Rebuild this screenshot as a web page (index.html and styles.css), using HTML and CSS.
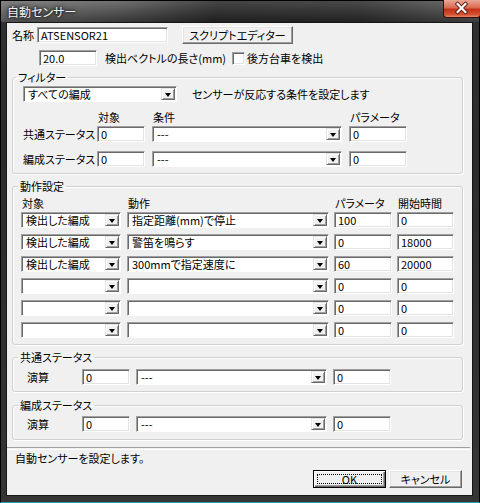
FILE: index.html
```html
<!DOCTYPE html>
<html lang="ja">
<head>
  <meta charset="UTF-8">
  <title>自動センサー</title>
  <link rel="stylesheet" href="styles.css">
</head>
<body>
<div class="window">
  <div class="titlebar">
    <span class="title">自動センサー</span>
    <span class="close">
      <svg width="38" height="18" viewBox="0 0 38 18">
        <path d="M15 5 L23 13 M23 5 L15 13" stroke="#5a1a10" stroke-width="4" stroke-linecap="square"/>
        <path d="M15 5 L23 13 M23 5 L15 13" stroke="#fff" stroke-width="2.2" stroke-linecap="square"/>
      </svg>
    </span>
  </div>

  <div class="client">
    <div class="row row-name">
      <span class="lbl name-lbl">名称</span>
      <div class="edit name-edit">ATSENSOR21</div>
      <div class="btn script-btn">スクリプトエディター</div>
    </div>

    <div class="row row-len">
      <div class="edit len-edit">20.0</div>
      <span class="lbl len-lbl">検出ベクトルの長さ(mm)</span>
      <span class="check"></span>
      <span class="lbl check-lbl">後方台車を検出</span>
    </div>

    <fieldset class="group filter">
      <legend>フィルター</legend>
      <div class="row">
        <div class="combo target-combo"><span class="txt">すべての編成</span><i class="drop"></i></div>
        <span class="lbl hint">センサーが反応する条件を設定します</span>
      </div>
      <div class="row head">
        <span class="c0"></span>
        <span class="c1">対象</span>
        <span class="c2">条件</span>
        <span class="c3">パラメータ</span>
      </div>
      <div class="row line">
        <span class="c0">共通ステータス</span>
        <div class="edit c1">0</div>
        <div class="combo c2"><span class="txt">---</span><i class="drop"></i></div>
        <div class="edit c3">0</div>
      </div>
      <div class="row line">
        <span class="c0">編成ステータス</span>
        <div class="edit c1">0</div>
        <div class="combo c2"><span class="txt">---</span><i class="drop"></i></div>
        <div class="edit c3">0</div>
      </div>
    </fieldset>

    <fieldset class="group action">
      <legend>動作設定</legend>
      <div class="row head">
        <span class="c1">対象</span>
        <span class="c2">動作</span>
        <span class="c3">パラメータ</span>
        <span class="c4">開始時間</span>
      </div>
      <div class="row line">
        <div class="combo c1"><span class="txt">検出した編成</span><i class="drop"></i></div>
        <div class="combo c2"><span class="txt">指定距離(mm)で停止</span><i class="drop"></i></div>
        <div class="edit c3">100</div>
        <div class="edit c4">0</div>
      </div>
      <div class="row line">
        <div class="combo c1"><span class="txt">検出した編成</span><i class="drop"></i></div>
        <div class="combo c2"><span class="txt">警笛を鳴らす</span><i class="drop"></i></div>
        <div class="edit c3">0</div>
        <div class="edit c4">18000</div>
      </div>
      <div class="row line">
        <div class="combo c1"><span class="txt">検出した編成</span><i class="drop"></i></div>
        <div class="combo c2"><span class="txt">300mmで指定速度に</span><i class="drop"></i></div>
        <div class="edit c3">60</div>
        <div class="edit c4">20000</div>
      </div>
      <div class="row line">
        <div class="combo c1"><span class="txt"></span><i class="drop"></i></div>
        <div class="combo c2"><span class="txt"></span><i class="drop"></i></div>
        <div class="edit c3">0</div>
        <div class="edit c4">0</div>
      </div>
      <div class="row line">
        <div class="combo c1"><span class="txt"></span><i class="drop"></i></div>
        <div class="combo c2"><span class="txt"></span><i class="drop"></i></div>
        <div class="edit c3">0</div>
        <div class="edit c4">0</div>
      </div>
      <div class="row line">
        <div class="combo c1"><span class="txt"></span><i class="drop"></i></div>
        <div class="combo c2"><span class="txt"></span><i class="drop"></i></div>
        <div class="edit c3">0</div>
        <div class="edit c4">0</div>
      </div>
    </fieldset>

    <fieldset class="group status common">
      <legend>共通ステータス</legend>
      <div class="row line">
        <span class="c0">演算</span>
        <div class="edit c1">0</div>
        <div class="combo c2"><span class="txt">---</span><i class="drop"></i></div>
        <div class="edit c3">0</div>
      </div>
    </fieldset>

    <fieldset class="group status formation">
      <legend>編成ステータス</legend>
      <div class="row line">
        <span class="c0">演算</span>
        <div class="edit c1">0</div>
        <div class="combo c2"><span class="txt">---</span><i class="drop"></i></div>
        <div class="edit c3">0</div>
      </div>
    </fieldset>

    <div class="separator"></div>
    <div class="status-text">自動センサーを設定します。</div>

    <div class="row buttons">
      <div class="btn default"><span class="focus">OK</span></div>
      <div class="btn cancel">キャンセル</div>
    </div>
  </div>
</div>
</body>
</html>
```

FILE: styles.css
```css
body {
  margin: 0;
  background: #1c1c1c;
  font-family: "Noto Sans CJK JP", "Noto Sans", sans-serif;
  font-size: 11px;
  line-height: 14px;
  color: #000;
  font-feature-settings: "palt";
}

.window {
  box-sizing: border-box;
  width: 480px;
  height: 503px;
  display: flex;
  flex-direction: column;
  border: 1px solid #000;
  border-bottom-color: #2a9bb0;
  padding: 0 6px 6px 5px;
  background: linear-gradient(to bottom, #6a6a6a 0, #303030 21px, #2b2b2b 140px, #353535 100%);
}

.titlebar {
  height: 21px;
  display: flex;
  align-items: flex-start;
  background: linear-gradient(100deg, rgba(255,255,255,0.18) 0, rgba(255,255,255,0.04) 25%, rgba(0,0,0,0.35) 45%, rgba(0,0,0,0.3) 75%, rgba(255,255,255,0.06) 100%);
  margin: 0 -6px 0 -5px;
  padding: 0 6px 0 5px;
}

.title {
  padding: 4px 0 0 1px;
  font-size: 12px;
  color: #f2f2f2;
  text-shadow: 0 0 3px #000, 0 0 6px rgba(0,0,0,0.8);
}

.close {
  margin: -1px -8px 0 auto;
  width: 38px;
  height: 18px;
  box-sizing: border-box;
  border: 1px solid #3a0d06;
  border-top: none;
  border-radius: 0 0 4px 4px;
  background: linear-gradient(to bottom, #e9a796 0, #d96a50 45%, #c3301a 55%, #d4502f 85%, #e48a6a 100%);
  display: flex;
}

.close svg {
  margin: -1px 0 0 -1px;
}

.client {
  flex: 1;
  display: flex;
  flex-direction: column;
  background: #f0f0f0;
  border: 1px solid #161616;
}

.row {
  display: flex;
  align-items: center;
}

.lbl {
  white-space: nowrap;
}

/* 3D controls */
.edit {
  box-sizing: border-box;
  height: 16px;
  background: #fff;
  border: 1px solid;
  border-color: #a0a0a0 #fff #fff #a0a0a0;
  box-shadow: inset 1px 1px #696969, inset -1px -1px #e3e3e3;
  padding: 0 2px 0 3px;
  line-height: 14px;
  white-space: nowrap;
}

.combo {
  box-sizing: border-box;
  height: 16px;
  display: flex;
  background: #fff;
  border: 1px solid;
  border-color: #a0a0a0 #fff #fff #a0a0a0;
  box-shadow: inset 1px 1px #696969;
  padding: 1px;
}

.combo .txt {
  flex: 1;
  padding-left: 3px;
  line-height: 13px;
  white-space: nowrap;
}

.drop {
  width: 14px;
  box-sizing: border-box;
  background: #f0f0f0;
  border: 1px solid;
  border-color: #e3e3e3 #696969 #696969 #e3e3e3;
  box-shadow: inset 1px 1px #fff, inset -1px -1px #a0a0a0;
  display: flex;
  align-items: center;
  justify-content: center;
}

.drop::after {
  content: "";
  border-left: 3.5px solid transparent;
  border-right: 3.5px solid transparent;
  border-top: 4px solid #000;
  margin-top: 1px;
}

.btn {
  box-sizing: border-box;
  height: 18px;
  display: flex;
  align-items: center;
  justify-content: center;
  background: #f0f0f0;
  border: 1px solid;
  border-color: #fff #696969 #696969 #fff;
  box-shadow: inset -1px -1px #a0a0a0, inset 1px 1px #e3e3e3;
  white-space: nowrap;
}

.check {
  box-sizing: border-box;
  width: 13px;
  height: 13px;
  background: #fff;
  border: 1px solid;
  border-color: #a0a0a0 #fff #fff #a0a0a0;
  box-shadow: inset 1px 1px #696969, inset -1px -1px #e3e3e3;
}

/* top rows */
.row-name {
  margin-top: 3px;
  padding-left: 5px;
  height: 18px;
}

.name-lbl { width: 25px; }
.name-edit { width: 131px; }
.script-btn { width: 111px; margin-left: 14px; }

.row-len {
  margin-top: 5px;
  padding-left: 32px;
  height: 18px;
}

.len-edit { width: 58px; }
.len-lbl { width: 127px; margin-left: 8px; }
.check-lbl { margin-left: 2px; }

/* group boxes */
.group {
  margin: 0 9px 0 5px;
  border: 1px solid #d0d0d0;
  border-radius: 3px;
  box-shadow: inset 1px 1px #fff, 1px 1px #fff;
  min-width: 0;
}

.group legend {
  padding: 0 2px;
  line-height: 14px;
}

.filter {
  margin-top: 3px;
  padding: 2px 0 6px 10px;
}

.filter legend { margin-left: -7px; }

.target-combo { width: 154px; height: 16px; }
.hint { margin-left: 15px; }

.filter .head { margin-top: 8px; height: 14px; }
.filter .line { height: 16px; }
.filter .head + .line { margin-top: 2px; }
.filter .line + .line { margin-top: 9px; }

.filter .c0 { width: 74px; white-space: nowrap; }
.filter .c1 { width: 48px; }
.filter .c2 { width: 190px; margin-left: 7px; }
.filter .c3 { width: 58px; margin-left: 7px; }
.filter .head .c1, .filter .head .c2, .filter .head .c3 { padding-left: 1px; box-sizing: border-box; }

.action {
  margin-top: 5px;
  padding: 3px 0 6px 8px;
}

.action legend { margin-left: -3px; }

.action .head { height: 14px; }
.action .line { height: 16px; margin-top: 6px; }
.action .head + .line { margin-top: 2px; }

.action .c1 { width: 100px; }
.action .c2 { width: 202px; margin-left: 6px; }
.action .c3 { width: 58px; margin-left: 5px; }
.action .c4 { width: 57px; margin-left: 5px; }
.action .head span { box-sizing: border-box; padding-left: 1px; }

.status {
  padding: 5px 0 6px 14px;
}

.status legend { margin-left: -9px; }

.common { margin-top: 5px; }
.formation { margin-top: 6px; padding-top: 4px; padding-bottom: 7px; }

.status .line { height: 16px; }
.status .c0 { width: 55px; white-space: nowrap; }
.status .c1 { width: 48px; }
.status .c2 { width: 191px; margin-left: 6px; }
.status .c3 { width: 58px; margin-left: 6px; }

/* bottom */
.separator {
  margin: 7px 2px 0 0;
  height: 1px;
  border-top: 1px solid #a0a0a0;
  border-bottom: 1px solid #fff;
}

.status-text {
  margin-top: 1px;
  padding-left: 8px;
}

.buttons {
  margin-top: 5px;
  justify-content: flex-end;
  padding-right: 10px;
}

.buttons .btn {
  width: 73px;
}

.btn.default {
  border: 1px solid #000;
  box-shadow: inset 1px 1px #fff, inset -1px -1px #696969, inset -2px -2px #a0a0a0;
  padding: 3px;
}

.btn.default .focus {
  flex: 1;
  align-self: stretch;
  display: flex;
  align-items: center;
  justify-content: center;
  outline: 1px dotted #000;
  outline-offset: -1px;
}

.btn.cancel {
  margin-left: 3px;
}
```
